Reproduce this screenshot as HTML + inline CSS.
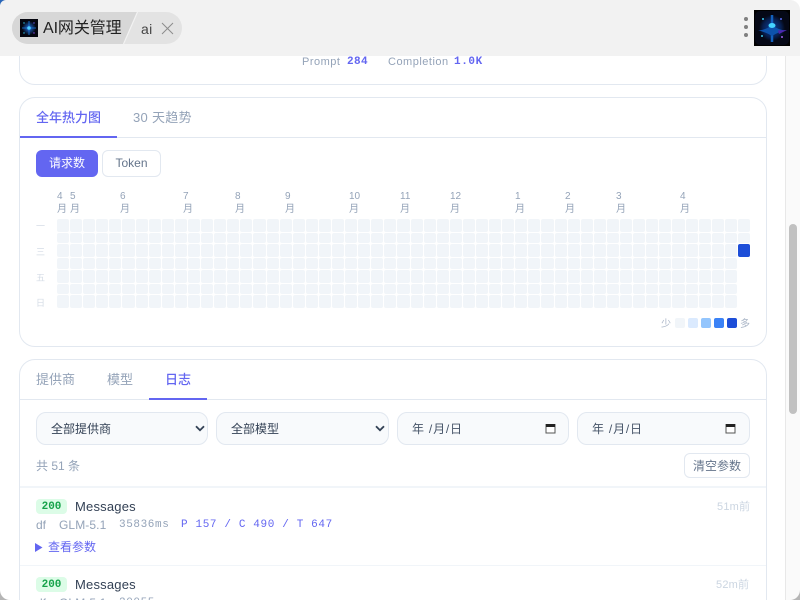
<!DOCTYPE html>
<html lang="zh"><head><meta charset="utf-8"><title>AI网关管理</title>
<style>
*{box-sizing:border-box;margin:0;padding:0}
html,body{width:800px;height:600px;overflow:hidden;background:#fff}
body{font-family:"Liberation Sans","Noto Sans CJK SC",sans-serif;position:relative}
.a{position:absolute;white-space:nowrap}
.mono{font-family:"Liberation Mono","Noto Sans CJK SC",monospace}
.card{position:absolute;left:19px;width:748px;border:1px solid #e2e8f0;border-radius:16px;background:#fff}
.sel{position:absolute;top:412px;height:33px;border:1px solid #e2e8f0;border-radius:10px;background:#f8fafc;font-size:12px;color:#334155;line-height:33px;padding-left:14px;white-space:nowrap}
.dt{letter-spacing:.8px;color:#475569}
.grid{position:absolute;left:57px;top:219px;width:693px;display:grid;grid-template-columns:repeat(53,1fr);grid-template-rows:13px 10px 13px 11px 13px 10px 13px;gap:1px}
.grid i{display:block;background:#f1f5f9;border-radius:2px}
.m{position:absolute;top:190px;width:14px;text-align:left;font-size:10px;line-height:13px;color:#94a3b8;white-space:normal}
.d{position:absolute;left:36px;font-size:9px;color:#d5dce6;line-height:12px}
.l{position:absolute;top:318px;width:10px;height:10px;border-radius:2px}
</style></head><body>

<!-- top card remainder -->
<div class="card" style="top:20px;height:65px"></div>
<div class="a" style="left:302px;top:55px;font-size:11px;color:#94a3b8;line-height:15px;letter-spacing:.5px">Prompt</div>
<div class="a mono" style="left:347px;top:55px;font-size:11px;font-weight:700;color:#6366f1;line-height:15px;letter-spacing:.4px">284</div>
<div class="a" style="left:388px;top:55px;font-size:11px;color:#94a3b8;line-height:15px;letter-spacing:.5px">Completion</div>
<div class="a mono" style="left:454px;top:55px;font-size:11px;font-weight:700;color:#6366f1;line-height:15px;letter-spacing:.6px">1.0K</div>

<!-- heatmap card -->
<div class="card" style="top:97px;height:250px"></div>
<div class="a" style="left:20px;top:137px;width:746px;height:1px;background:#e2e8f0"></div>
<div class="a" style="left:20px;top:136px;width:97px;height:2px;background:#6366f1"></div>
<div class="a" style="left:36px;top:109px;font-size:13px;line-height:18px;color:#6366f1;font-weight:500">全年热力图</div>
<div class="a" style="left:133px;top:109px;font-size:13px;line-height:18px;color:#94a3b8;letter-spacing:.3px">30 天趋势</div>
<div class="a" style="left:36px;top:150px;width:62px;height:27px;border-radius:6px;background:#6366f1;color:#fff;font-size:12px;line-height:27px;text-align:center">请求数</div>
<div class="a" style="left:102px;top:150px;width:59px;height:27px;border-radius:6px;border:1px solid #e2e8f0;background:#fff;color:#64748b;font-size:12px;line-height:25px;text-align:center">Token</div>

<div class="m" style="left:57px">4 月</div><div class="m" style="left:70px">5 月</div><div class="m" style="left:120px">6 月</div><div class="m" style="left:183px">7 月</div><div class="m" style="left:235px">8 月</div><div class="m" style="left:285px">9 月</div><div class="m" style="left:349px">10 月</div><div class="m" style="left:400px">11 月</div><div class="m" style="left:450px">12 月</div><div class="m" style="left:515px">1 月</div><div class="m" style="left:565px">2 月</div><div class="m" style="left:616px">3 月</div><div class="m" style="left:680px">4 月</div>

<div class="d" style="top:220px">一</div><div class="d" style="top:246px">三</div><div class="d" style="top:272px">五</div><div class="d" style="top:297px">日</div>

<div class="grid" id="g"><i></i><i></i><i></i><i></i><i></i><i></i><i></i><i></i><i></i><i></i><i></i><i></i><i></i><i></i><i></i><i></i><i></i><i></i><i></i><i></i><i></i><i></i><i></i><i></i><i></i><i></i><i></i><i></i><i></i><i></i><i></i><i></i><i></i><i></i><i></i><i></i><i></i><i></i><i></i><i></i><i></i><i></i><i></i><i></i><i></i><i></i><i></i><i></i><i></i><i></i><i></i><i></i><i></i>
<i></i><i></i><i></i><i></i><i></i><i></i><i></i><i></i><i></i><i></i><i></i><i></i><i></i><i></i><i></i><i></i><i></i><i></i><i></i><i></i><i></i><i></i><i></i><i></i><i></i><i></i><i></i><i></i><i></i><i></i><i></i><i></i><i></i><i></i><i></i><i></i><i></i><i></i><i></i><i></i><i></i><i></i><i></i><i></i><i></i><i></i><i></i><i></i><i></i><i></i><i></i><i></i><i></i>
<i></i><i></i><i></i><i></i><i></i><i></i><i></i><i></i><i></i><i></i><i></i><i></i><i></i><i></i><i></i><i></i><i></i><i></i><i></i><i></i><i></i><i></i><i></i><i></i><i></i><i></i><i></i><i></i><i></i><i></i><i></i><i></i><i></i><i></i><i></i><i></i><i></i><i></i><i></i><i></i><i></i><i></i><i></i><i></i><i></i><i></i><i></i><i></i><i></i><i></i><i></i><i></i><i style="background:#1d4ed8"></i>
<i></i><i></i><i></i><i></i><i></i><i></i><i></i><i></i><i></i><i></i><i></i><i></i><i></i><i></i><i></i><i></i><i></i><i></i><i></i><i></i><i></i><i></i><i></i><i></i><i></i><i></i><i></i><i></i><i></i><i></i><i></i><i></i><i></i><i></i><i></i><i></i><i></i><i></i><i></i><i></i><i></i><i></i><i></i><i></i><i></i><i></i><i></i><i></i><i></i><i></i><i></i><i></i><b></b>
<i></i><i></i><i></i><i></i><i></i><i></i><i></i><i></i><i></i><i></i><i></i><i></i><i></i><i></i><i></i><i></i><i></i><i></i><i></i><i></i><i></i><i></i><i></i><i></i><i></i><i></i><i></i><i></i><i></i><i></i><i></i><i></i><i></i><i></i><i></i><i></i><i></i><i></i><i></i><i></i><i></i><i></i><i></i><i></i><i></i><i></i><i></i><i></i><i></i><i></i><i></i><i></i><b></b>
<i></i><i></i><i></i><i></i><i></i><i></i><i></i><i></i><i></i><i></i><i></i><i></i><i></i><i></i><i></i><i></i><i></i><i></i><i></i><i></i><i></i><i></i><i></i><i></i><i></i><i></i><i></i><i></i><i></i><i></i><i></i><i></i><i></i><i></i><i></i><i></i><i></i><i></i><i></i><i></i><i></i><i></i><i></i><i></i><i></i><i></i><i></i><i></i><i></i><i></i><i></i><i></i><b></b>
<i></i><i></i><i></i><i></i><i></i><i></i><i></i><i></i><i></i><i></i><i></i><i></i><i></i><i></i><i></i><i></i><i></i><i></i><i></i><i></i><i></i><i></i><i></i><i></i><i></i><i></i><i></i><i></i><i></i><i></i><i></i><i></i><i></i><i></i><i></i><i></i><i></i><i></i><i></i><i></i><i></i><i></i><i></i><i></i><i></i><i></i><i></i><i></i><i></i><i></i><i></i><i></i><b></b>
</div>

<div class="a" style="left:661px;top:319px;font-size:10px;line-height:12px;color:#a8b4c6">少</div>
<div class="l" style="left:675px;background:#f1f5f9"></div>
<div class="l" style="left:688px;background:#dbeafe"></div>
<div class="l" style="left:701px;background:#93c5fd"></div>
<div class="l" style="left:714px;background:#3b82f6"></div>
<div class="l" style="left:727px;background:#1d4ed8"></div>
<div class="a" style="left:740px;top:319px;font-size:10px;line-height:12px;color:#a8b4c6">多</div>

<!-- logs card -->
<div class="card" style="top:359px;height:270px"></div>
<div class="a" style="left:20px;top:399px;width:746px;height:1px;background:#e2e8f0"></div>
<div class="a" style="left:149px;top:398px;width:58px;height:2px;background:#6366f1"></div>
<div class="a" style="left:36px;top:371px;font-size:13px;line-height:18px;color:#94a3b8">提供商</div>
<div class="a" style="left:107px;top:371px;font-size:13px;line-height:18px;color:#94a3b8">模型</div>
<div class="a" style="left:165px;top:371px;font-size:13px;line-height:18px;color:#6366f1;font-weight:500">日志</div>

<div class="sel" style="left:36px;width:172px">全部提供商</div>
<div class="sel" style="left:216px;width:173px">全部模型</div>
<svg class="a" style="left:195px;top:425px" width="10" height="7" viewBox="0 0 10 7"><path d="M1 1.2 5 5.2 9 1.2" fill="none" stroke="#334155" stroke-width="1.8"/></svg>
<svg class="a" style="left:375px;top:425px" width="10" height="7" viewBox="0 0 10 7"><path d="M1 1.2 5 5.2 9 1.2" fill="none" stroke="#334155" stroke-width="1.8"/></svg>
<div class="sel dt" style="left:397px;width:172px">年 /月/日</div>
<div class="sel dt" style="left:577px;width:173px">年 /月/日</div>
<svg class="a" style="left:545px;top:423px" width="11" height="11" viewBox="0 0 11 11"><path d="M1 1.5H10V10H1Z" fill="#fff" stroke="#555" stroke-width="1"/><path d="M1 1H10V4H1Z" fill="#222"/></svg>
<svg class="a" style="left:725px;top:423px" width="11" height="11" viewBox="0 0 11 11"><path d="M1 1.5H10V10H1Z" fill="#fff" stroke="#555" stroke-width="1"/><path d="M1 1H10V4H1Z" fill="#222"/></svg>

<div class="a" style="left:36px;top:458px;font-size:12px;line-height:17px;color:#94a3b8">共 51 条</div>
<div class="a" style="left:684px;top:453px;width:66px;height:25px;border:1px solid #e2e8f0;border-radius:6px;color:#64748b;font-size:12px;line-height:25px;text-align:center">清空参数</div>
<div class="a" style="left:20px;top:486px;width:746px;height:2px;background:#f1f5f9"></div>

<div class="a mono" style="left:36px;top:499px;width:31px;height:15px;border-radius:4px;background:#dcfce7;color:#16a34a;font-size:11px;font-weight:700;line-height:17px;text-align:center">200</div>
<div class="a" style="left:75px;top:498px;font-size:13px;line-height:17px;color:#334155;letter-spacing:.2px">Messages</div>
<div class="a" style="left:36px;top:517px;font-size:12px;line-height:17px;color:#94a3b8">df</div>
<div class="a" style="left:59px;top:517px;font-size:12px;line-height:17px;color:#94a3b8;letter-spacing:.1px">GLM-5.1</div>
<div class="a mono" style="left:119px;top:518px;font-size:11px;line-height:15px;color:#94a3b8;letter-spacing:.6px">35836ms</div>
<div class="a mono" style="left:181px;top:518px;font-size:11px;line-height:15px;color:#6366f1;letter-spacing:.63px">P 157 / C 490 / T 647</div>
<svg class="a" style="left:35px;top:543px" width="8" height="9" viewBox="0 0 8 9"><path d="M0 0 7.500 4.500 0 9Z" fill="#6366f1"/></svg>
<div class="a" style="left:48px;top:539px;font-size:12px;line-height:17px;color:#6366f1">查看参数</div>
<div class="a" style="left:717px;top:500px;font-size:11px;line-height:15px;color:#cbd5e1;letter-spacing:.2px">51m前</div>
<div class="a" style="left:20px;top:565px;width:746px;height:1px;background:#f1f5f9"></div>

<div class="a mono" style="left:36px;top:577px;width:31px;height:15px;border-radius:4px;background:#dcfce7;color:#16a34a;font-size:11px;font-weight:700;line-height:17px;text-align:center">200</div>
<div class="a" style="left:75px;top:576px;font-size:13px;line-height:17px;color:#334155;letter-spacing:.2px">Messages</div>
<div class="a" style="left:36px;top:595px;font-size:12px;line-height:17px;color:#94a3b8">df</div>
<div class="a" style="left:59px;top:595px;font-size:12px;line-height:17px;color:#94a3b8;letter-spacing:.1px">GLM-5.1</div>
<div class="a mono" style="left:119px;top:596px;font-size:11px;line-height:15px;color:#94a3b8;letter-spacing:.6px">20055</div>
<div class="a" style="left:716px;top:578px;font-size:11px;line-height:15px;color:#cbd5e1;letter-spacing:.2px">52m前</div>

<!-- scrollbar -->
<div class="a" style="left:785px;top:56px;width:15px;height:544px;background:#fafafa;border-left:1px solid #e8e8e8"></div>
<div class="a" style="left:789px;top:224px;width:8px;height:190px;border-radius:4px;background:#c1c1c1"></div>

<!-- top bar -->
<div class="a" style="left:0;top:0;width:800px;height:56px;background:#f2f2f2"></div>
<div class="a" style="left:12px;top:12px;width:170px;height:32px;border-radius:16px;background:#e3e3e3"></div>
<svg class="a" style="left:12px;top:12px" width="126" height="32" viewBox="0 0 126 32"><path d="M16 0H125L111 32H16A16 16 0 0 1 16 0Z" fill="#d7d7d7"/><path d="M125.500 0 111.500 32" stroke="#f2f2f2" stroke-width="1.200"/></svg>
<svg class="a" style="left:20px;top:19px" width="18" height="18" viewBox="0 0 18 18"><defs><radialGradient id="g1"><stop offset="0" stop-color="#1f6fe0"/><stop offset="1" stop-color="#05060f"/></radialGradient></defs><rect width="18" height="18" fill="#05060f"/><circle cx="9" cy="9" r="7" fill="url(#g1)"/><path d="M9 2V16M2 9H16" stroke="#1d7be0" stroke-width=".8"/><circle cx="9" cy="9" r="1.800" fill="#4fd0ff"/><circle cx="4" cy="4" r=".7" fill="#33c5f0"/><circle cx="14" cy="4" r=".7" fill="#6a5cf0"/><circle cx="4" cy="14" r=".7" fill="#33c5f0"/><circle cx="14" cy="14" r=".7" fill="#8a4cf0"/></svg>
<div class="a" style="left:43px;top:19px;font-size:16px;line-height:20px;color:#222;letter-spacing:-.1px">AI网关管理</div>
<div class="a" style="left:141px;top:20px;font-size:14px;line-height:18px;color:#444;letter-spacing:.3px">ai</div>
<svg class="a" style="left:161px;top:22px" width="13" height="13" viewBox="0 0 13 13"><path d="M1 1 12 12M12 1 1 12" stroke="#8c8c8c" stroke-width="1"/></svg>
<div class="a" style="left:744px;top:17px;width:4px;height:4px;border-radius:50%;background:#808080"></div>
<div class="a" style="left:744px;top:25px;width:4px;height:4px;border-radius:50%;background:#808080"></div>
<div class="a" style="left:744px;top:33px;width:4px;height:4px;border-radius:50%;background:#808080"></div>
<svg class="a" style="left:754px;top:10px" width="36" height="36" viewBox="0 0 36 36"><defs><radialGradient id="g2"><stop offset="0" stop-color="#0c3f96"/><stop offset=".7" stop-color="#081f50"/><stop offset="1" stop-color="#050816"/></radialGradient></defs><rect width="36" height="36" fill="#000"/><rect x="1" y="1" width="34" height="34" rx="5" fill="#050816"/><circle cx="18" cy="18" r="13" fill="url(#g2)"/><path d="M18 5V32" stroke="#1260bc" stroke-width="2.500"/><path d="M4 20.500Q12 20 18 15 24 20 32 20.500 24 22 18 26 12 22 4 20.500Z" fill="#0d52ac"/><path d="M24 20.500 33 20 25 24Z" fill="#4f24ac"/><ellipse cx="18" cy="15.500" rx="3.500" ry="2.500" fill="#45d4ff"/><circle cx="9" cy="9" r="1" fill="#3cc8f0"/><circle cx="27" cy="9" r="1" fill="#5a6cf0"/><circle cx="8" cy="26" r="1" fill="#3cc8f0"/><circle cx="28" cy="27" r="1" fill="#a060f0"/></svg>

<!-- window corners -->
<svg class="a" style="left:0;top:0" width="6" height="6" viewBox="0 0 6 6"><path d="M0 0H6A6 6 0 0 0 0 6Z" fill="#2a66b8"/></svg>
<svg class="a" style="left:790px;top:0" width="10" height="10" viewBox="0 0 10 10"><path d="M10 0H0A10 10 0 0 1 10 10Z" fill="#fff"/></svg>
<svg class="a" style="left:0;top:590px" width="10" height="10" viewBox="0 0 10 10"><path d="M0 10H10A10 10 0 0 1 0 0Z" fill="#b5b5b5"/></svg>
<svg class="a" style="left:790px;top:590px" width="10" height="10" viewBox="0 0 10 10"><path d="M10 10H0A10 10 0 0 0 10 0Z" fill="#b5b5b5"/></svg>
</body></html>
